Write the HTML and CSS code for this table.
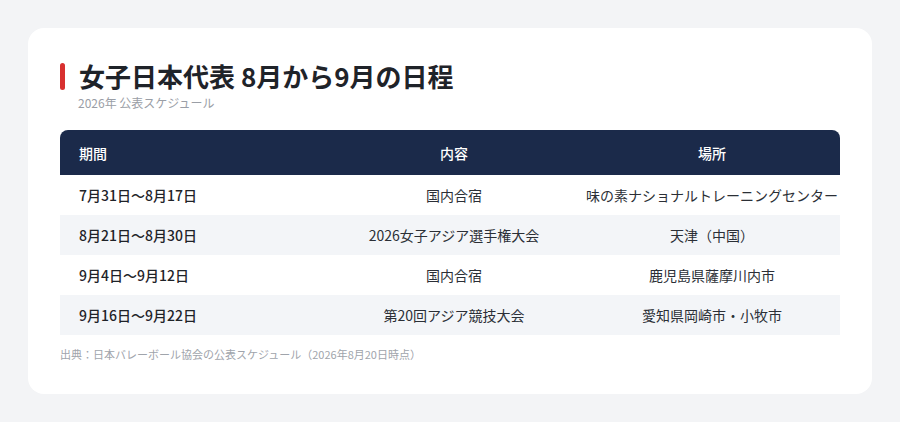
FILE: index.html
```html
<!DOCTYPE html>
<html lang="ja">
<head>
<meta charset="utf-8">
<link rel="stylesheet" href="styles.css">
</head>
<body>
<div class="card">
  <div class="title-row">
    <span class="bar"></span>
    <h1 class="title">女子日本代表 8月から9月の日程</h1>
  </div>
  <p class="subtitle">2026年 公表スケジュール</p>
  <div class="table">
    <div class="row head">
      <div class="c1">期間</div>
      <div class="c2">内容</div>
      <div class="c3">場所</div>
    </div>
    <div class="row">
      <div class="c1">7月31日〜8月17日</div>
      <div class="c2">国内合宿</div>
      <div class="c3">味の素ナショナルトレーニングセンター</div>
    </div>
    <div class="row alt">
      <div class="c1">8月21日〜8月30日</div>
      <div class="c2">2026女子アジア選手権大会</div>
      <div class="c3">天津（中国）</div>
    </div>
    <div class="row">
      <div class="c1">9月4日〜9月12日</div>
      <div class="c2">国内合宿</div>
      <div class="c3">鹿児島県薩摩川内市</div>
    </div>
    <div class="row alt">
      <div class="c1">9月16日〜9月22日</div>
      <div class="c2">第20回アジア競技大会</div>
      <div class="c3">愛知県岡崎市・小牧市</div>
    </div>
  </div>
  <p class="source">出典：日本バレーボール協会の公表スケジュール（2026年8月20日時点）</p>
</div>
</body>
</html>
```

FILE: styles.css
```css
html, body {
  margin: 0;
  padding: 0;
}
body {
  background: #f3f4f6;
  font-family: "Noto Sans CJK JP", "Noto Sans", sans-serif;
  color: #1f2329;
  padding: 28px;
}
.card {
  background: #ffffff;
  border-radius: 16px;
  padding: 32px;
  height: 302px;
}
.title-row {
  display: flex;
  align-items: center;
  gap: 14px;
}
.bar {
  width: 5px;
  height: 27px;
  border-radius: 3px;
  background: #d8302f;
  flex: none;
}
.title {
  margin: 0;
  font-size: 26px;
  line-height: 32px;
  font-weight: 700;
  color: #1f2329;
}
.subtitle {
  margin: 3px 0 0 18px;
  font-size: 12px;
  line-height: 16px;
  color: #9a9ea6;
}
.table {
  margin-top: 19px;
}
.row {
  display: grid;
  grid-template-columns: 264px 260px 256px;
  height: 40px;
  align-items: center;
  font-size: 14px;
  line-height: 20px;
  color: #2b2f36;
}
.row.alt {
  background: #f3f5f8;
}
.row.head {
  height: 45px;
  background: #1b2a4a;
  color: #ffffff;
  border-radius: 8px 8px 0 0;
  font-weight: 500;
}
.c1 {
  padding-left: 19px;
  font-weight: 500;
  color: inherit;
}
.row:not(.head) .c1 {
  color: #1f2329;
}
.c2, .c3 {
  text-align: center;
  white-space: nowrap;
}
.source {
  margin: 12px 0 0;
  font-size: 11px;
  line-height: 15px;
  color: #a0a4ab;
}
```
